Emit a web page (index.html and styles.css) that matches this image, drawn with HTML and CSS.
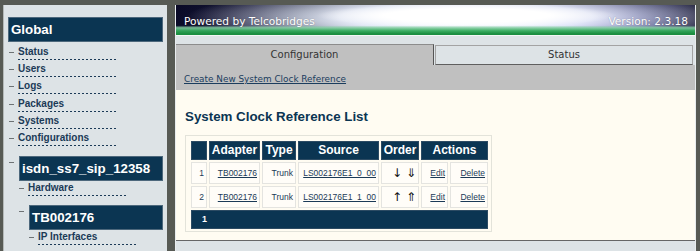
FILE: index.html
```html
<!DOCTYPE html>
<html>
<head>
<meta charset="utf-8">
<title>System Clock Reference List</title>
<link rel="stylesheet" href="styles.css">
</head>
<body>
<div class="page">
  <aside class="sidebar">
    <div class="node-title">Global</div>
    <ul class="items top-items">
      <li class="item"><span class="tick"></span><a class="label" href="#">Status</a></li>
      <li class="item"><span class="tick"></span><a class="label" href="#">Users</a></li>
      <li class="item"><span class="tick"></span><a class="label" href="#">Logs</a></li>
      <li class="item"><span class="tick"></span><a class="label" href="#">Packages</a></li>
      <li class="item"><span class="tick"></span><a class="label" href="#">Systems</a></li>
      <li class="item"><span class="tick"></span><a class="label" href="#">Configurations</a></li>
    </ul>
    <div class="branch top-branch">
      <span class="tick"></span>
      <div class="branch-body">
        <div class="node-title">isdn_ss7_sip_12358</div>
        <ul class="items">
          <li class="item"><span class="tick"></span><a class="label" href="#">Hardware</a></li>
        </ul>
        <div class="branch">
          <span class="tick"></span>
          <div class="branch-body">
            <div class="node-title">TB002176</div>
            <ul class="items">
              <li class="item"><span class="tick"></span><a class="label" href="#">IP Interfaces</a></li>
            </ul>
          </div>
        </div>
      </div>
    </div>
  </aside>

  <main class="main">
    <header class="banner">
      <span>Powered by Telcobridges</span>
      <span>Version: 2.3.18</span>
    </header>
    <nav class="tabbar">
      <div class="tab tab-active">Configuration</div>
      <div class="tab tab-idle">Status</div>
    </nav>
    <div class="toolbar">
      <a class="toolbar-link" href="#">Create New System Clock Reference</a>
    </div>
    <section class="content">
      <h2 class="title">System Clock Reference List</h2>
      <div class="table-box">
        <table class="grid">
          <colgroup>
            <col class="c-num"><col class="c-adapter"><col class="c-type"><col class="c-source"><col class="c-order"><col class="c-edit"><col class="c-delete">
          </colgroup>
          <thead>
            <tr>
              <th></th><th>Adapter</th><th>Type</th><th>Source</th><th>Order</th><th colspan="2">Actions</th>
            </tr>
          </thead>
          <tbody>
            <tr>
              <td>1</td><td><a href="#">TB002176</a></td><td>Trunk</td><td><a href="#">LS002176E1_0_00</a></td><td class="order">↓ ⇓</td><td><a href="#">Edit</a></td><td><a href="#">Delete</a></td>
            </tr>
            <tr>
              <td>2</td><td><a href="#">TB002176</a></td><td>Trunk</td><td><a href="#">LS002176E1_1_00</a></td><td class="order">↑ ⇑</td><td><a href="#">Edit</a></td><td><a href="#">Delete</a></td>
            </tr>
          </tbody>
          <tfoot>
            <tr><td colspan="7">1</td></tr>
          </tfoot>
        </table>
      </div>
    </section>
    <div class="bottom"></div>
  </main>
</div>
</body>
</html>
```
FILE: styles.css
```css
html, body {
  margin: 0;
  height: 100%;
  overflow: hidden;
}
body {
  background: #575a54;
  font-family: "Liberation Sans", Arial, sans-serif;
}
.page {
  display: flex;
  gap: 8px;
  padding: 5px 0 0 3px;
  height: 100%;
  box-sizing: border-box;
}

/* ---------- sidebar ---------- */
.sidebar {
  flex: 0 0 164px;
  box-sizing: border-box;
  background: #dde3e6;
  border-left: 1px solid #b4b9b8;
  padding: 12px 4px 0 4px;
}
.node-title {
  height: 23px;
  line-height: 23px;
  background: #0b3552;
  border: 1px solid #4d687c;
  color: #fff;
  font-weight: bold;
  font-size: 13.33px;
  padding-left: 2px;
  white-space: nowrap;
}
.items {
  list-style: none;
  margin: 0;
  padding: 0;
}
.top-items {
  margin-top: 3px;
  padding-left: 1px;
}
.item {
  display: flex;
  align-items: flex-start;
  height: 17.2px;
}
.tick {
  flex: none;
  width: 5px;
  height: 1px;
  margin-top: 7px;
  margin-right: 4px;
  background: #6d7274;
}
.label {
  display: block;
  width: 100px;
  font-size: 10px;
  font-weight: bold;
  line-height: 14px;
  padding-bottom: 1px;
  color: #1b3a57;
  text-decoration: none;
  white-space: nowrap;
  background: repeating-linear-gradient(to right, #1b3a57 0 2px, transparent 2px 4px) left bottom / 100% 1px no-repeat;
}
.branch {
  display: flex;
  align-items: flex-start;
  margin-top: 7px;
}
.top-branch {
  margin-top: 7.5px;
  padding-left: 1px;
}
.branch > .tick {
  margin-top: 6px;
  margin-right: 5px;
}
.branch-body {
  flex: 1;
  min-width: 0;
}

/* ---------- main ---------- */
.main {
  flex: 0 0 521px;
  box-sizing: border-box;
  border-left: 1px solid #e8ecee;
  border-right: 1px solid #e8ecee;
  display: flex;
  flex-direction: column;
  background: #dde3e6;
}
.banner {
  height: 30px;
  box-sizing: border-box;
  display: flex;
  justify-content: space-between;
  align-items: flex-start;
  padding: 9px 7px 0 8px;
  font-family: "DejaVu Sans", Verdana, sans-serif;
  font-size: 10.6px;
  line-height: 14px;
  color: #fff;
  text-shadow: 0 0 1px rgba(0, 0, 0, .35);
  background:
    linear-gradient(to bottom, rgba(0,0,0,0) 0, rgba(0,0,0,0) 68%, rgba(130,205,160,.9) 76%, rgba(50,170,90,.95) 86%, #1b8e40 96%, #1b8e40 100%),
    radial-gradient(ellipse 150px 12px at 56% 35%, #ffffff 0, #ffffff 55%, rgba(255,255,255,0) 100%),
    radial-gradient(ellipse 280px 30px at 56% 40%, #ffffff 0, rgba(240,244,255,.9) 45%, rgba(220,228,250,0) 100%),
    linear-gradient(to bottom, rgba(8,8,36,.45) 0, rgba(8,8,36,0) 50%),
    linear-gradient(to right, #0b0b28 0%, #1d2040 14%, #3d4a66 27%, #8d9cb8 38%, #dfe6f4 47%, #ffffff 55%, #d8dcf8 64%, #6a6cc0 77%, #2a2e78 89%, #0a0a2a 100%);
}
.tabbar {
  height: 30px;
  box-sizing: border-box;
  border-top: 1px solid #f2f6f4;
  display: flex;
  align-items: flex-end;
  background: #dde3e6;
}
.tab {
  box-sizing: border-box;
  font-family: "DejaVu Sans", Verdana, sans-serif;
  font-size: 10px;
  color: #333;
  text-align: center;
}
.tab-active {
  flex: 0 0 258px;
  height: 21px;
  line-height: 20px;
  background: #c0c0c0;
  border-top: 1px solid #8c8c8c;
  border-right: 1px solid #555;
}
.tab-idle {
  flex: 0 0 258px;
  margin-left: 1px;
  height: 20px;
  line-height: 18px;
  background: #dde3e6;
  border: 1px solid #a3a3a3;
  border-bottom-color: #5f5f5f;
}
.toolbar {
  height: 25px;
  box-sizing: border-box;
  background: #c0c0c0;
  padding: 3px 0 0 8px;
}
.toolbar-link {
  font-family: "DejaVu Sans", Verdana, sans-serif;
  font-size: 8.9px;
  line-height: 14px;
  color: #1b3d5e;
}
.content {
  height: 150px;
  box-sizing: border-box;
  background: #fffcf2;
  padding: 19px 0 0 9px;
}
.title {
  margin: 0 0 10px;
  font-size: 13.33px;
  line-height: 16px;
  font-weight: bold;
  color: #0b3552;
}
.table-box {
  width: 307px;
  box-sizing: border-box;
  border: 1px solid #e3e3da;
  padding: 3px 1px 0 3px;
}
.grid {
  width: 301px;
  table-layout: fixed;
  border-collapse: separate;
  border-spacing: 2px;
}
.c-num { width: 16px; }
.c-adapter { width: 51px; }
.c-type { width: 34px; }
.c-source { width: 81px; }
.c-order { width: 38px; }
.c-edit { width: 27px; }
.c-delete { width: 38px; }
.grid th {
  background: #0b3552;
  border: 1px solid #2c4b63;
  color: #fff;
  font-size: 12px;
  font-weight: bold;
  line-height: 17px;
  padding: 0;
  text-align: center;
  white-space: nowrap;
}
.grid tbody td {
  background: #fffdf8;
  border: 1px solid #e4e4e0;
  color: #1b3a57;
  font-size: 8.5px;
  line-height: 20px;
  padding: 0 2px 0 1px;
  text-align: right;
  white-space: nowrap;
  overflow: hidden;
}
.grid a {
  color: #1b3a57;
}
.grid td.order {
  font-family: "DejaVu Sans", sans-serif;
  font-size: 12px;
  color: #111;
}
.grid tfoot td {
  background: #0b3552;
  border: 1px solid #2c4b63;
  color: #fff;
  font-size: 9px;
  font-weight: bold;
  line-height: 17px;
  padding: 0 0 0 10px;
  text-align: left;
}
.bottom {
  flex: 1;
  border-top: 1px solid #666;
  background: #dde3e6;
}
```
